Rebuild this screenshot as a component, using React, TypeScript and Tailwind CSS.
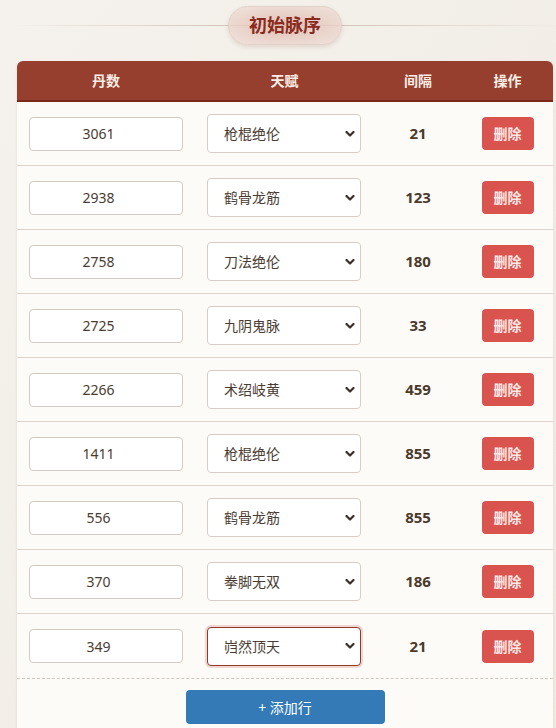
import React from 'react'

interface IRow {
  id: number
  count: string
  talent: string
  gap: number
}

const talents = ['枪棍绝伦', '鹤骨龙筋', '刀法绝伦', '九阴鬼脉', '术绍岐黄', '拳脚无双', '岿然顶天']

const rows: IRow[] = [
  { id: 1, count: '3061', talent: '枪棍绝伦', gap: 21 },
  { id: 2, count: '2938', talent: '鹤骨龙筋', gap: 123 },
  { id: 3, count: '2758', talent: '刀法绝伦', gap: 180 },
  { id: 4, count: '2725', talent: '九阴鬼脉', gap: 33 },
  { id: 5, count: '2266', talent: '术绍岐黄', gap: 459 },
  { id: 6, count: '1411', talent: '枪棍绝伦', gap: 855 },
  { id: 7, count: '556', talent: '鹤骨龙筋', gap: 855 },
  { id: 8, count: '370', talent: '拳脚无双', gap: 186 },
  { id: 9, count: '349', talent: '岿然顶天', gap: 21 },
]

const cols = 'grid grid-cols-[178px_179px_88px_91px]'

function Chevron() {
  return (
    <svg
      width="10"
      height="7"
      viewBox="0 0 10 7"
      className="pointer-events-none absolute right-[6px] top-1/2 -translate-y-1/2"
    >
      <path d="M1.5 1.5 L5 5 L8.5 1.5" fill="none" stroke="#3b2f28" strokeWidth="2.2" strokeLinecap="round" strokeLinejoin="round" />
    </svg>
  )
}

function Row({ row, focused }: { row: IRow; focused?: boolean }) {
  return (
    <div className={`${cols} h-[64px] items-center border-b border-[#dcd4cc] last:border-b-0`}>
      <div className="px-3">
        <input
          readOnly
          value={row.count}
          className="h-[34px] w-[154px] rounded-[4px] border border-[#d3cbc3] bg-white pr-[15px] text-center text-[14px] text-[#4a3c33] outline-none"
        />
      </div>
      <div className="px-3">
        <div className="relative w-[154px]">
          <select
            defaultValue={row.talent}
            className={
              focused
                ? 'h-[39px] w-full appearance-none rounded-[4px] border border-[#8e3a2d] bg-white pl-4 text-[14px] text-[#4a3c33] shadow-[0_0_0_2px_rgba(214,150,140,0.35)] outline-none'
                : 'h-[39px] w-full appearance-none rounded-[4px] border border-[#d6cec6] bg-white pl-4 text-[14px] text-[#4a3c33] outline-none'
            }
          >
            {talents.map((t) => (
              <option key={t}>{t}</option>
            ))}
          </select>
          <Chevron />
        </div>
      </div>
      <div className="text-center text-[15px] font-bold text-[#4b3a2c]">{row.gap}</div>
      <div className="flex justify-center">
        <button className="h-[33px] w-[52px] rounded-[4px] bg-[#d9534f] text-[14px] font-semibold text-[#fde8e6]">删除</button>
      </div>
    </div>
  )
}

export default function App() {
  return (
    <div
      className="h-[728px] overflow-hidden bg-gradient-to-br from-[#f5f2ed] to-[#efeae2] pt-[6px]"
      style={{ fontFamily: '"Noto Sans", "Noto Sans CJK SC", sans-serif' }}
    >
      <div className="relative ml-[17px] flex h-[39px] w-[536px] justify-center">
        <div className="absolute left-[-10px] right-[-10px] top-[19px] h-px bg-gradient-to-r from-transparent via-[#cbb9ad] to-transparent" />
        <div className="relative flex w-[114px] items-center justify-center rounded-full border border-[#e3d2ca] bg-[radial-gradient(ellipse_at_center,rgba(222,185,172,0.85),rgba(240,224,217,0.75))] text-[18px] font-bold text-[#8a2b1f] shadow-[0_2px_4px_rgba(150,110,95,0.2)]">
          初始脉序
        </div>
      </div>

      <div className="ml-[17px] mt-[16px] w-[536px] overflow-hidden rounded-t-[6px] bg-[#fdfbf8] pb-10 shadow-[0_1px_3px_rgba(120,90,70,0.12)]">
        <div className={`${cols} h-[41px] items-center border-b-2 border-[#7a2a1c] bg-[#963f2e] text-center text-[14px] font-bold text-[#fbeee6]`}>
          <div>丹数</div>
          <div>天赋</div>
          <div>间隔</div>
          <div>操作</div>
        </div>

        <div className="border-b border-dashed border-[#cfc6bd]">
          {rows.map((row, i) => (
            <Row key={row.id} row={row} focused={i === rows.length - 1} />
          ))}
        </div>

        <div className="flex justify-center pt-[11px]">
          <button className="h-[34px] w-[199px] rounded-[4px] bg-[#337ab7] text-[14px] text-white">+ 添加行</button>
        </div>
      </div>
    </div>
  )
}
